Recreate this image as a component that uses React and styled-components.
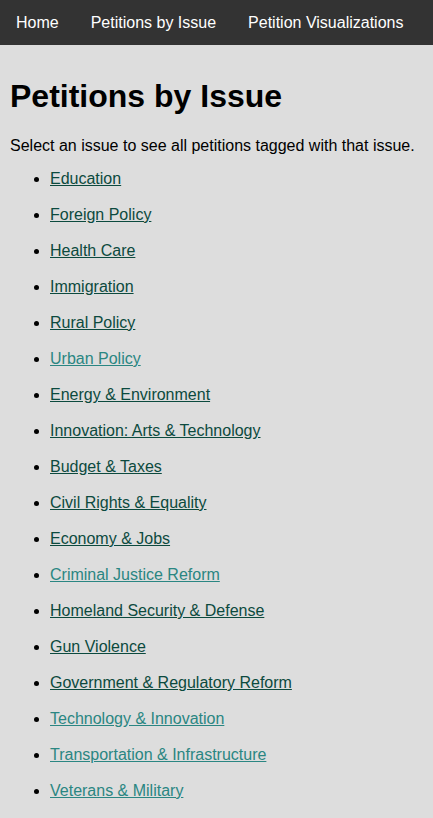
import React from "react";
import styled, { createGlobalStyle } from "styled-components";

const Global = createGlobalStyle`
  html, body { margin: 0; padding: 0; background: #dddddd; }
  body { font-family: "Liberation Sans", Arial, Helvetica, sans-serif; color: #000; }
`;

const Nav = styled.nav`
  display: flex;
  background: #333333;
  height: 45px;
  align-items: center;
`;

const NavLink = styled.a`
  color: #ffffff;
  text-decoration: none;
  font-size: 16px;
  padding: 0 16px;
  line-height: 45px;
`;

const Main = styled.main`
  padding: 0 10px;
`;

const Title = styled.h1`
  font-size: 32px;
  font-weight: bold;
  margin: 33px 0 0;
  line-height: 37px;
`;

const Intro = styled.p`
  font-size: 16px;
  margin: 22px 0 0;
  line-height: 18px;
`;

const List = styled.ul`
  margin: 15px 0 0;
  padding-left: 40px;
  list-style: disc;
`;

const Item = styled.li`
  font-size: 16px;
  line-height: 18px;
  margin-bottom: 18px;
`;

const IssueLink = styled.a`
  color: ${(p) => (p.$visited ? "#2a8682" : "#0c4a3e")};
  text-decoration: underline;
`;

const issues = [
  ["Education", false],
  ["Foreign Policy", false],
  ["Health Care", false],
  ["Immigration", false],
  ["Rural Policy", false],
  ["Urban Policy", true],
  ["Energy & Environment", false],
  ["Innovation: Arts & Technology", false],
  ["Budget & Taxes", false],
  ["Civil Rights & Equality", false],
  ["Economy & Jobs", false],
  ["Criminal Justice Reform", true],
  ["Homeland Security & Defense", false],
  ["Gun Violence", false],
  ["Government & Regulatory Reform", false],
  ["Technology & Innovation", true],
  ["Transportation & Infrastructure", true],
  ["Veterans & Military", true],
];

export default function App() {
  return (
    <>
      <Global />
      <Nav>
        <NavLink href="#">Home</NavLink>
        <NavLink href="#">Petitions by Issue</NavLink>
        <NavLink href="#">Petition Visualizations</NavLink>
      </Nav>
      <Main>
        <Title>Petitions by Issue</Title>
        <Intro>Select an issue to see all petitions tagged with that issue.</Intro>
        <List>
          {issues.map(([name, visited]) => (
            <Item key={name}>
              <IssueLink href="#" $visited={visited}>{name}</IssueLink>
            </Item>
          ))}
        </List>
      </Main>
    </>
  );
}
